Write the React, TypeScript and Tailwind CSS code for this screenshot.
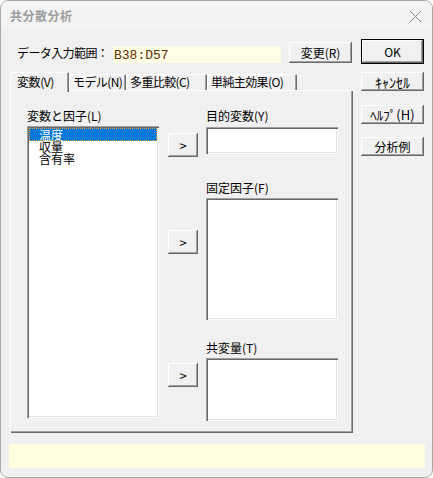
import React from 'react'

const raised =
  'bg-[#f0f0f0] shadow-[inset_-1px_-1px_0_#696969,inset_1px_1px_0_#ffffff,inset_-2px_-2px_0_#a0a0a0]'
const sunken =
  'bg-white shadow-[inset_1px_1px_0_#a0a0a0,inset_2px_2px_0_#696969,inset_-1px_-1px_0_#ffffff,inset_-2px_-2px_0_#e3e3e3]'

function Btn({ label, h = 'h-[19px]', size = 'text-[12px]', className = '' }: { label: string; h?: string; size?: string; className?: string }) {
  return (
    <div className={`w-[63px] ${h} ${raised} flex items-center justify-center whitespace-nowrap ${size} leading-none text-black ${className}`}>
      {label}
    </div>
  )
}

function Arrow({ className = '' }: { className?: string }) {
  return (
    <div className={`w-[30px] h-[24px] ${raised} flex items-center justify-center text-[13px] leading-none text-black ${className}`}>
      &gt;
    </div>
  )
}

const tabs = [
  { label: 'モデル(N)', w: 'w-[57px]' },
  { label: '多重比較(C)', w: 'w-[81px]' },
  { label: '単純主効果(O)', w: 'w-[90px]' },
]

export default function App() {
  return (
    <div className="w-[433px] h-[478px] bg-white font-['Noto_Sans_CJK_JP',sans-serif]">
      <div className="w-[433px] h-[478px] rounded-[8px] border border-[#a8a8a8] bg-[#f0f0f0] overflow-hidden flex flex-col">
        {/* title bar */}
        <div className="h-[29px] bg-[#f3f3f3] flex items-center justify-between pl-[9px] pr-[10px]">
          <span className="text-[12px] font-bold text-[#9c9c9c] tracking-[0.5px]">共分散分析</span>
          <svg width="13" height="13" viewBox="0 0 13 13" className="mt-[1px]">
            <path d="M1 1 L12 12 M12 1 L1 12" stroke="#8a8a8a" strokeWidth="1" fill="none" />
          </svg>
        </div>

        <div className="flex pl-[9px]">
          {/* left column */}
          <div className="w-[343px] flex flex-col">
            <div className="mt-[12px] h-[21px] flex items-end">
              <span className="ml-[7px] w-[96px] self-center whitespace-nowrap text-[12px] leading-none text-black tracking-[-0.6px]">データ入力範囲：</span>
              <div className="w-[168px] h-[17px] bg-[#fffde3] flex items-center">
                <span className="font-['Liberation_Mono',monospace] text-[13px] leading-none text-[#5e2f00] pl-[1px] pt-[2px]">B38:D57</span>
              </div>
              <Btn label="変更(R)" h="h-[21px]" className="ml-[8px]" />
            </div>

            {/* tabs */}
            <div className="mt-[9px] h-[18px] flex items-end relative z-10">
              <div className="w-[59px] h-[20px] -mb-[2px] bg-[#f0f0f0] rounded-t-[2px] shadow-[inset_1px_1px_0_#ffffff,inset_-1px_0_0_#696969,inset_-2px_0_0_#a0a0a0] flex items-start pl-[7px] pt-[3px] whitespace-nowrap text-[12px] leading-[14px] tracking-[-0.4px] text-black">
                変数(V)
              </div>
              {tabs.map(t => (
                <div
                  key={t.label}
                  className={`${t.w} h-[16px] rounded-t-[2px] shadow-[inset_1px_1px_0_#ffffff,inset_-1px_0_0_#696969,inset_-2px_0_0_#a0a0a0] flex items-center pl-[4px] whitespace-nowrap overflow-hidden text-[12px] leading-none tracking-[-0.6px] text-black`}
                >
                  {t.label}
                </div>
              ))}
            </div>

            {/* panel */}
            <div className="h-[343px] flex shadow-[inset_1px_1px_0_#ffffff,inset_-1px_-1px_0_#696969,inset_-2px_-2px_0_#a0a0a0]">
              <div className="ml-[17px] pt-[19px] flex flex-col">
                <span className="h-[14px] whitespace-nowrap text-[12px] leading-[14px] text-black">変数と因子(L)</span>
                <div className={`mt-[3px] w-[132px] h-[292px] ${sunken} p-[2px] flex flex-col`}>
                  <div className="h-[13px] bg-[#0078d7] outline outline-1 outline-dotted -outline-offset-1 outline-[#e8a040] pl-[10px] text-[12px] leading-[13px] text-white">温度</div>
                  <div className="h-[12px] pl-[10px] text-[12px] leading-[12px] text-black">収量</div>
                  <div className="h-[12px] pl-[10px] text-[12px] leading-[12px] text-black">含有率</div>
                </div>
              </div>

              <div className="ml-[9px] flex flex-col">
                <Arrow className="mt-[43px]" />
                <Arrow className="mt-[73px]" />
                <Arrow className="mt-[109px]" />
              </div>

              <div className="ml-[8px] pt-[19px] flex flex-col">
                <span className="h-[14px] whitespace-nowrap text-[12px] leading-[14px] text-black">目的変数(Y)</span>
                <div className={`mt-[4px] w-[132px] h-[27px] ${sunken}`} />
                <span className="mt-[27px] h-[14px] whitespace-nowrap text-[12px] leading-[14px] text-black">固定因子(F)</span>
                <div className={`mt-[3px] w-[132px] h-[122px] ${sunken}`} />
                <span className="mt-[21px] h-[14px] whitespace-nowrap text-[12px] leading-[14px] text-black">共変量(T)</span>
                <div className={`mt-[3px] w-[132px] h-[63px] ${sunken}`} />
              </div>
            </div>
          </div>

          {/* right column */}
          <div className="ml-[8px] flex flex-col">
            <div className="mt-[9px] w-[63px] h-[25px] border border-black">
              <div className={`w-full h-full ${raised} flex items-center justify-center text-[12px] leading-none text-black`}>OK</div>
            </div>
            <Btn label="ｷｬﾝｾﾙ" size="text-[14px]" className="mt-[8px]" />
            <Btn label="ﾍﾙﾌﾟ(H)" size="text-[13px]" className="mt-[14px]" />
            <Btn label="分析例" className="mt-[13px]" />
          </div>
        </div>

        {/* status bar */}
        <div className="mt-[11px] ml-[8px] w-[416px] h-[24px] bg-[#fffee0]" />
      </div>
    </div>
  )
}
